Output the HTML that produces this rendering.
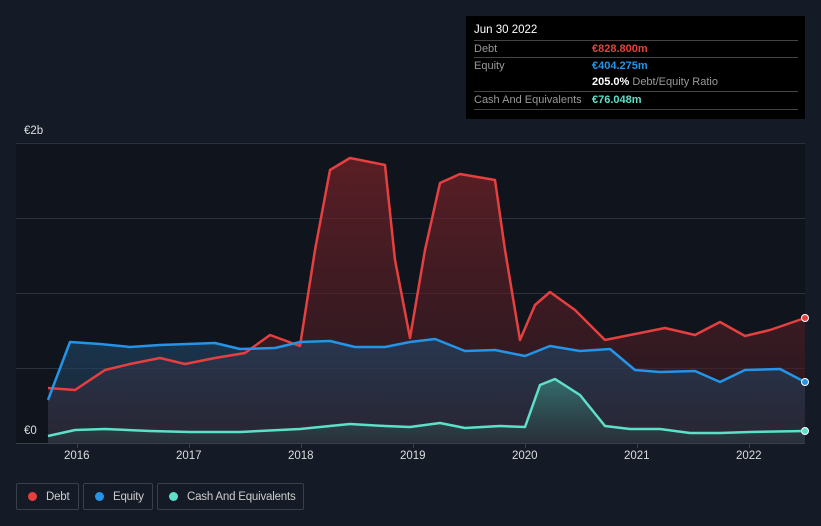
<!DOCTYPE html>
<html><head><style>
html,body{margin:0;width:821px;height:526px;overflow:hidden}
body{background:#151b26;font-family:"Liberation Sans",sans-serif;position:relative}
.tip{position:absolute;left:466px;top:16px;width:339px;height:103px;background:#000;color:#fff;font-size:11px}
.row{position:absolute;left:8px;right:7px;height:17px;border-top:1px solid #444;color:#999;line-height:17px;white-space:nowrap}
.v{position:absolute;left:118px}
.leg{position:absolute;top:483px;height:27px;border:1px solid #3a404b;border-radius:2px;color:#ccc;font-size:11.5px;line-height:27px;box-sizing:border-box;white-space:nowrap;letter-spacing:-0.2px}
.dot{display:inline-block;width:9px;height:9px;border-radius:50%;margin:0 9px 0 11px;vertical-align:-1px}
.ax{position:absolute;color:#ddd;font-size:11.5px}
</style></head><body>
<svg width="821" height="526" style="position:absolute;left:0;top:0">
<defs>
<linearGradient id="gd" x1="0" y1="0" x2="0" y2="1"><stop offset="0" stop-color="#7a2228" stop-opacity=".7"/><stop offset="1" stop-color="#3a1a22" stop-opacity=".5"/></linearGradient>
<linearGradient id="ge" x1="0" y1="0" x2="0" y2="1"><stop offset="0" stop-color="#1e4a6e" stop-opacity=".6"/><stop offset="1" stop-color="#2a3346" stop-opacity=".5"/></linearGradient>
<linearGradient id="gc" x1="0" y1="0" x2="0" y2="1"><stop offset="0" stop-color="#3a8a80" stop-opacity=".7"/><stop offset="1" stop-color="#2a3a40" stop-opacity=".5"/></linearGradient>
</defs>
<rect x="16" y="143" width="789" height="300" fill="#10151d"/>
<g stroke="#2c323d" stroke-width="1"><line x1="16" y1="143.5" x2="805" y2="143.5"/><line x1="16" y1="218.5" x2="805" y2="218.5"/><line x1="16" y1="293.5" x2="805" y2="293.5"/><line x1="16" y1="368.5" x2="805" y2="368.5"/></g>
<polygon fill="url(#gd)" points="48,443 48,388 75,390 105,370 130,364 160,358 185,364 215,358 245,353 270,335 300,346 315,250 330,170 350,158 385,165 395,260 410,338 425,250 440,183 460,174 495,180 505,250 520,340 535,305 550,292 575,310 605,340 635,334 665,328 695,335 720,322 745,336 770,330 805,318 805,443"/>
<polygon fill="url(#ge)" points="48,443 48,400 70,342 100,344 130,347 160,345 215,343 240,349 275,348 300,342 330,341 355,347 385,347 410,342 435,339 465,351 495,350 525,356 550,346 580,351 610,349 635,370 660,372 695,371 720,382 745,370 780,369 805,382 805,443"/>
<polygon fill="url(#gc)" points="48,443 48,436 75,430 105,429 150,431 190,432 240,432 300,429 350,424 385,426 410,427 440,423 465,428 500,426 525,427 540,385 555,379 580,395 605,426 630,429 660,429 690,433 720,433 750,432 805,431 805,443"/>
<g fill="none" stroke-width="2.5" stroke-linejoin="round">
<polyline stroke="#e5403f" points="48,388 75,390 105,370 130,364 160,358 185,364 215,358 245,353 270,335 300,346 315,250 330,170 350,158 385,165 395,260 410,338 425,250 440,183 460,174 495,180 505,250 520,340 535,305 550,292 575,310 605,340 635,334 665,328 695,335 720,322 745,336 770,330 805,318"/>
<polyline stroke="#2394e8" points="48,400 70,342 100,344 130,347 160,345 215,343 240,349 275,348 300,342 330,341 355,347 385,347 410,342 435,339 465,351 495,350 525,356 550,346 580,351 610,349 635,370 660,372 695,371 720,382 745,370 780,369 805,382"/>
<polyline stroke="#5ee0c8" points="48,436 75,430 105,429 150,431 190,432 240,432 300,429 350,424 385,426 410,427 440,423 465,428 500,426 525,427 540,385 555,379 580,395 605,426 630,429 660,429 690,433 720,433 750,432 805,431"/>
</g>
<circle cx="805" cy="318" r="3.5" fill="#e5403f" stroke="#fff" stroke-width="1"/>
<circle cx="805" cy="382" r="3.5" fill="#2394e8" stroke="#fff" stroke-width="1"/>
<circle cx="805" cy="431" r="3.5" fill="#5ee0c8" stroke="#fff" stroke-width="1"/>
<line x1="16" y1="443.5" x2="805" y2="443.5" stroke="#3a404b"/>
<g stroke="#3a404b"><line x1="77.5" y1="443" x2="77.5" y2="448"/><line x1="189.5" y1="443" x2="189.5" y2="448"/><line x1="301.5" y1="443" x2="301.5" y2="448"/><line x1="413.5" y1="443" x2="413.5" y2="448"/><line x1="525.5" y1="443" x2="525.5" y2="448"/><line x1="637.5" y1="443" x2="637.5" y2="448"/><line x1="749.5" y1="443" x2="749.5" y2="448"/></g>
</svg>
<div class="ax" style="left:24px;top:125px">€2b</div>
<div class="ax" style="left:24px;top:425px">€0</div>
<div class="ax" style="left:64px;top:450px">2016</div>
<div class="ax" style="left:176px;top:450px">2017</div>
<div class="ax" style="left:288px;top:450px">2018</div>
<div class="ax" style="left:400px;top:450px">2019</div>
<div class="ax" style="left:512px;top:450px">2020</div>
<div class="ax" style="left:624px;top:450px">2021</div>
<div class="ax" style="left:736px;top:450px">2022</div>
<div class="tip">
<div style="position:absolute;left:8px;top:8px;font-size:11.5px">Jun 30 2022</div>
<div class="row" style="top:24px">Debt<span class="v" style="color:#e5403f;font-weight:bold">€828.800m</span></div>
<div class="row" style="top:41px">Equity<span class="v" style="color:#2394e8;font-weight:bold">€404.275m</span></div>
<div class="row" style="top:58px;border-top:none"><span class="v"><b style="color:#fff">205.0%</b> Debt/Equity Ratio</span></div>
<div class="row" style="top:75px">Cash And Equivalents<span class="v" style="color:#5ee0c8;font-weight:bold">€76.048m</span></div>
<div class="row" style="top:93px;height:0"></div>
</div>
<div class="leg" style="left:16px;width:63px"><span class="dot" style="background:#e5403f"></span>Debt</div>
<div class="leg" style="left:83px;width:70px"><span class="dot" style="background:#2394e8"></span>Equity</div>
<div class="leg" style="left:157px;width:147px"><span class="dot" style="background:#5ee0c8"></span>Cash And Equivalents</div>
</body></html>
